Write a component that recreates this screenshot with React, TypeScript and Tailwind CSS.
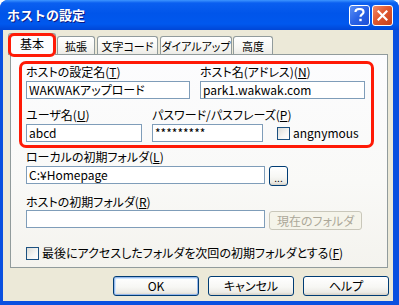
import type { ReactNode } from 'react';

const RED = 'border-[#ff1a06]';

function Acc({ k }: { k: string }) {
  return (
    <>
      (<u className="underline-offset-[1px]">{k}</u>)
    </>
  );
}

function Field({ w, children }: { w: string; children?: ReactNode }) {
  return (
    <div className={`${w} flex h-[18px] items-center border border-[#7f9db9] bg-white pl-[2px] leading-[14px] text-black`}>
      {children}
    </div>
  );
}

function Check() {
  return (
    <span className="block h-[13px] w-[13px] shrink-0 border border-[#1c5180] bg-[linear-gradient(135deg,#dcdcd7_0%,#f6f6f4_60%,#ffffff_100%)]" />
  );
}

function Button({ w, children, def, disabled }: { w: string; children: ReactNode; def?: boolean; disabled?: boolean }) {
  if (disabled) {
    return (
      <div className={`${w} flex h-[19px] items-center justify-center rounded-[3px] border border-[#c9c7ba] bg-[#f5f4ea] text-[#aca899]`}>
        {children}
      </div>
    );
  }
  return (
    <div
      className={`${w} flex h-[20px] items-center justify-center rounded-[3px] border border-[#003c74] bg-[linear-gradient(180deg,#ffffff_0%,#f7f7f4_55%,#ecebe6_85%,#d6d0c5_100%)] text-black ${
        def ? 'shadow-[inset_0_0_0_1px_#98b8ea,inset_1px_1px_0_1px_#cee7ff]' : ''
      }`}
    >
      {children}
    </div>
  );
}

function Tab({ label, w, ml }: { label: string; w: string; ml: string }) {
  return (
    <div
      className={`${w} ${ml} flex h-[18px] items-center justify-center whitespace-nowrap rounded-t-[3px] border border-b-0 border-[#919b9c] bg-[linear-gradient(180deg,#ffffff_0%,#f7f7f4_60%,#ecebe6_100%)] text-[11px] text-black`}
    >
      {label}
    </div>
  );
}

export default function App() {
  return (
    <div className="flex h-[305px] w-[399px] flex-col overflow-hidden rounded-t-[8px] bg-[#0a50e0] font-['MS_UI_Gothic','Noto_Sans_CJK_JP',sans-serif] text-[12px] leading-[14px]">
      {/* title bar */}
      <div className="flex h-[30px] shrink-0 items-center bg-[linear-gradient(180deg,#3d95ff_0%,#0a5ff0_10%,#0055ea_45%,#0058ee_80%,#0046d6_100%)] pl-[7px] pr-[6px]">
        <span className="flex-1 text-[13px] font-bold text-white [text-shadow:1px_1px_0_#0a1883]">ホストの設定</span>
        <div className="flex gap-[2px]">
          <div className="flex h-[21px] w-[21px] items-center justify-center rounded-[3px] border border-white bg-[linear-gradient(135deg,#5a8ff5_0%,#2a63e6_50%,#1d4fd6_100%)]">
            <svg width="11" height="14" viewBox="0 0 11 14">
              <path d="M1.5 4 C1.5 1.5 3.5 1 5.5 1 C8 1 9.5 2.3 9.5 4.2 C9.5 6.3 6.5 6.6 6.5 8.8" fill="none" stroke="white" strokeWidth="2.2" />
              <rect x="5.3" y="10.8" width="2.4" height="2.4" fill="white" />
            </svg>
          </div>
          <div className="flex h-[21px] w-[21px] items-center justify-center rounded-[3px] border border-white bg-[linear-gradient(135deg,#f08a6a_0%,#e0582f_45%,#c8401c_100%)]">
            <svg width="11" height="11" viewBox="0 0 11 11">
              <path d="M1.5 1.5 L9.5 9.5 M9.5 1.5 L1.5 9.5" stroke="white" strokeWidth="2.2" strokeLinecap="square" />
            </svg>
          </div>
        </div>
      </div>

      {/* body */}
      <div className="mb-[4px] ml-[3px] mr-[6px] flex flex-1 flex-col bg-[#ece9d8] [font-feature-settings:'palt']">
        {/* tabs */}
        <div className="flex h-[24px] items-end pl-[5px]">
          <div className="relative z-10 -mb-[1px] flex h-[22px] w-[48px] items-center justify-center rounded-t-[3px] border border-b-0 border-[#919b9c] bg-[#fcfcfe] pb-[1px] text-black">
            基本
            <span className={`absolute -bottom-[2px] -left-[1px] -right-[1px] -top-[1px] rounded-[6px] border-[3px] ${RED}`} />
          </div>
          <Tab label="拡張" w="w-[38px]" ml="ml-[1px]" />
          <Tab label="文字コード" w="w-[61px]" ml="ml-[2px]" />
          <Tab label="ダイアルアップ" w="w-[72px]" ml="ml-[2px]" />
          <Tab label="高度" w="w-[40px]" ml="ml-[1px]" />
        </div>

        {/* panel */}
        <div className="ml-[7px] flex h-[214px] w-[378px] flex-col border border-[#919b9c] bg-[linear-gradient(180deg,#fcfcfe_0%,#f9f9f7_60%,#f4f3ee_100%)] text-black">
          <div className={`ml-[8px] mt-[6px] flex h-[87px] w-[355px] flex-col rounded-[7px] border-[3px] ${RED} pl-[4px] pt-[1px]`}>
            <div className="flex gap-[10px]">
              <div className="flex w-[164px] flex-col gap-[2px]">
                <span className="h-[14px]">
                  ホストの設定名<Acc k="T" />
                </span>
                <Field w="w-[164px]">WAKWAKアップロード</Field>
              </div>
              <div className="flex w-[165px] flex-col gap-[2px]">
                <span className="h-[14px]">
                  ホスト名(アドレス)<Acc k="N" />
                </span>
                <Field w="w-[165px]">park1.wakwak.com</Field>
              </div>
            </div>
            <div className="mt-[9px] flex items-end">
              <div className="flex w-[116px] flex-col gap-[2px]">
                <span className="h-[14px]">
                  ユーザ名<Acc k="U" />
                </span>
                <Field w="w-[116px]">abcd</Field>
              </div>
              <div className="ml-[10px] flex w-[111px] flex-col gap-[2px]">
                <span className="h-[14px] whitespace-nowrap">
                  パスワード/パスフレーズ<Acc k="P" />
                </span>
                <Field w="w-[111px]">*********</Field>
              </div>
              <div className="mb-[2px] ml-[14px] flex items-center gap-[3px]">
                <Check />
                <span>angnymous</span>
              </div>
            </div>
          </div>

          <div className="flex flex-col pl-[15px]">
            <span className="mt-[2px] h-[14px]">
              ローカルの初期フォルダ<Acc k="L" />
            </span>
            <div className="mt-[2px] flex items-start gap-[4px]">
              <Field w="w-[239px]">C:¥Homepage</Field>
              <Button w="w-[19px]">
                <span className="pt-[3px] text-[10px] leading-[10px]">...</span>
              </Button>
            </div>
            <span className="mt-[9px] h-[14px]">
              ホストの初期フォルダ<Acc k="R" />
            </span>
            <div className="mt-[1px] flex items-start gap-[4px]">
              <Field w="w-[239px]" />
              <div className="mt-[1px]">
                <Button w="w-[93px]" disabled>
                  現在のフォルダ
                </Button>
              </div>
            </div>
            <div className="mt-[16px] flex items-center gap-[3px]">
              <Check />
              <span>
                最後にアクセスしたフォルダを次回の初期フォルダとする<Acc k="F" />
              </span>
            </div>
          </div>
        </div>

        {/* buttons */}
        <div className="mt-[8px] flex justify-end gap-[9px] pr-[4px]">
          <Button w="w-[86px]" def>
            OK
          </Button>
          <Button w="w-[86px]">キャンセル</Button>
          <Button w="w-[86px]">ヘルプ</Button>
        </div>
      </div>
    </div>
  );
}
